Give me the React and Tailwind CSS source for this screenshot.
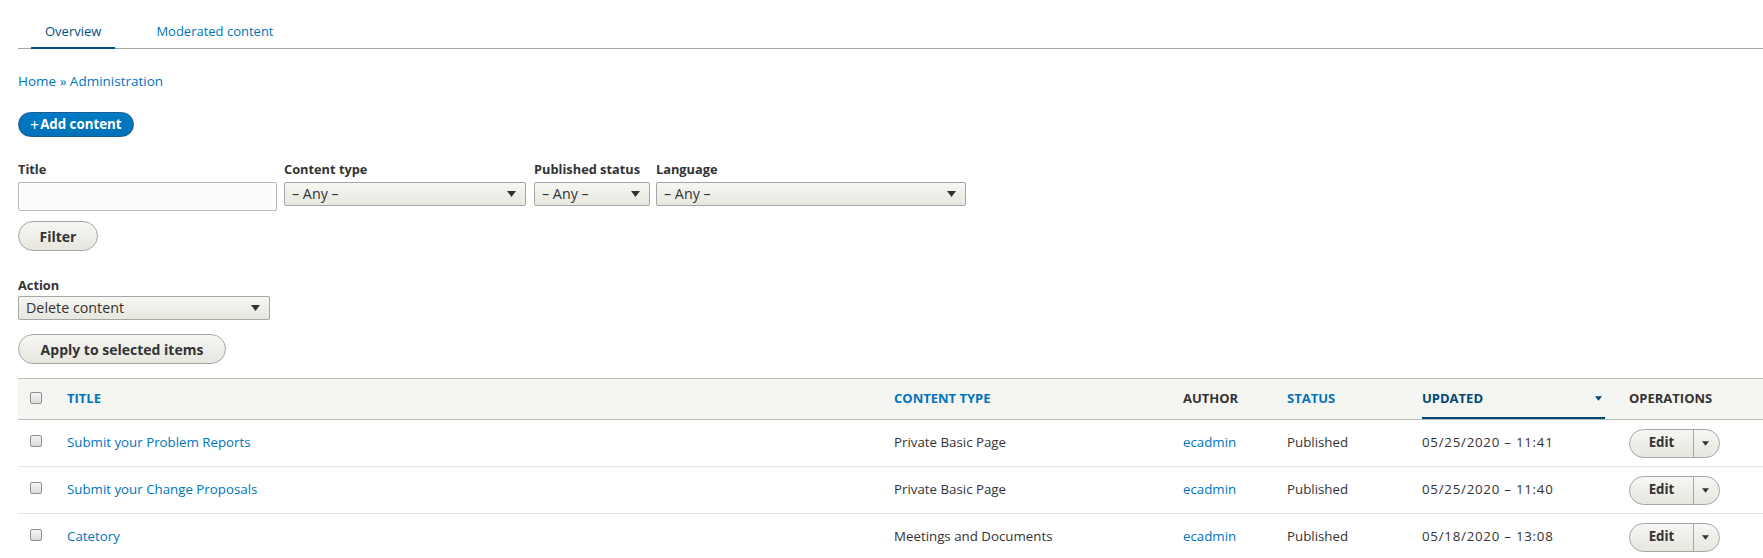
import React from 'react';

const font = { fontFamily: '"Open Sans", "Liberation Sans", sans-serif' };

const Caret = ({ className = '' }) => (
  <svg width="9" height="6" viewBox="0 0 9 6" className={className}>
    <path d="M0 0 L9 0 L4.5 6 Z" fill="currentColor" />
  </svg>
);

const Select = ({ value, className = '' }) => (
  <div
    className={`flex items-center justify-between h-[24px] border border-[#a6a6a6] rounded-[2px] bg-gradient-to-b from-[#f6f6f3] to-[#e7e7df] pl-[7px] pr-[9px] text-[14.3px] text-[#333] ${className}`}
  >
    <span>{value}</span>
    <Caret className="text-[#333]" />
  </div>
);

const Button = ({ children, className = '' }) => (
  <button
    className={`h-[30px] rounded-full border border-[#a6a6a6] bg-gradient-to-b from-[#f6f6f3] to-[#e7e7df] text-[14px] font-bold text-[#333] ${className}`}
  >
    {children}
  </button>
);

const Checkbox = () => (
  <span className="block w-[12px] h-[12px] rounded-[2px] border border-[#8f8f8f] bg-gradient-to-b from-[#f4f4f4] to-[#dcdcdc]" />
);

const cols = 'grid grid-cols-[49px_827px_289px_104px_135px_207px_1fr]';

const rows = [
  { title: 'Submit your Problem Reports', type: 'Private Basic Page', date: '05/25/2020 – 11:41' },
  { title: 'Submit your Change Proposals', type: 'Private Basic Page', date: '05/25/2020 – 11:40' },
  { title: 'Catetory', type: 'Meetings and Documents', date: '05/18/2020 – 13:08' },
];

const App = () => {
  return (
    <div className="min-h-screen bg-white text-[#333] pl-[18px] text-[13.3px]" style={font}>
      <nav className="flex border-b border-[#a6a6a6] pl-[13px] pt-[22px]">
        <a className="px-[14px] pb-[7px] leading-[18px] border-b-2 border-[#004f80] mb-[-1px] text-[#004f80] text-[13px]">Overview</a>
        <a className="ml-[27px] px-[14px] pb-[7px] leading-[18px] border-b-2 border-transparent mb-[-1px] text-[#0074bd] text-[13px]">Moderated content</a>
      </nav>

      <div className="mt-[23px] leading-[18px] text-[#0074bd] text-[13.5px]">
        Home » Administration
      </div>

      <button className="mt-[22px] h-[25px] px-[11px] rounded-full border border-[#1e5c90] bg-gradient-to-b from-[#007bc6] to-[#0071b8] text-white font-bold text-[13.3px] leading-none flex items-center">
        <span className="text-[16px] mr-[1px] font-normal leading-none">+</span>Add content
      </button>

      <div className="mt-[24px] flex items-start">
        <div>
          <div className="font-bold leading-[16px] mb-[5px] text-[12.8px]">Title</div>
          <div className="w-[259px] h-[29px] border border-[#b8b8b8] rounded-[2px] bg-[#fcfcfa]" />
        </div>
        <div className="ml-[7px]">
          <div className="font-bold leading-[16px] mb-[5px] text-[12.8px]">Content type</div>
          <Select value="– Any –" className="w-[242px]" />
        </div>
        <div className="ml-[8px]">
          <div className="font-bold leading-[16px] mb-[5px] text-[12.8px]">Published status</div>
          <Select value="– Any –" className="w-[116px]" />
        </div>
        <div className="ml-[6px]">
          <div className="font-bold leading-[16px] mb-[5px] text-[12.8px]">Language</div>
          <Select value="– Any –" className="w-[310px]" />
        </div>
      </div>

      <Button className="mt-[10px] w-[80px]">Filter</Button>

      <div className="mt-[26px] font-bold leading-[16px] mb-[3px] text-[12.8px]">Action</div>
      <Select value="Delete content" className="w-[252px] h-[23px]" />

      <Button className="mt-[14px] w-[208px] block">Apply to selected items</Button>

      <div className="mt-[14px]">
        <div className={`${cols} h-[42px] bg-[#f5f5f2] border-y border-[#bfbfba] items-center text-[13px] font-bold uppercase`}>
          <div className="pl-[12px] mb-[3px]"><Checkbox /></div>
          <div className="text-[#0074bd]">Title</div>
          <div className="text-[#0074bd]">Content type</div>
          <div>Author</div>
          <div className="text-[#0074bd]">Status</div>
          <div className="h-full">
            <div className="w-[183px] h-full flex items-center justify-between border-b-2 border-[#004875] text-[#004875] pt-[2px]">
              <span>Updated</span>
              <Caret className="w-[7px] h-[5px] mr-[3px] mb-[2px]" />
            </div>
          </div>
          <div>Operations</div>
        </div>

        {rows.map((r, i) => (
          <div key={i} className={`${cols} h-[47px] border-b border-[#e6e4df] items-center`}>
            <div className="pl-[12px] mb-[4px]"><Checkbox /></div>
            <div className="text-[#0074bd]">{r.title}</div>
            <div>{r.type}</div>
            <div className="text-[#0074bd]">ecadmin</div>
            <div>Published</div>
            <div className="tracking-[0.75px]">{r.date}</div>
            <div>
              <div className="flex w-[91px] h-[29px] rounded-full border border-[#a6a6a6] bg-gradient-to-b from-[#f6f6f3] to-[#e7e7df] overflow-hidden">
                <span className="w-[64px] flex items-center justify-center font-bold border-r border-[#a6a6a6]">Edit</span>
                <span className="flex-1 flex items-center justify-center pr-[2px]">
                  <Caret className="w-[7px] h-[5px]" />
                </span>
              </div>
            </div>
          </div>
        ))}
      </div>
    </div>
  );
};

export default App;
